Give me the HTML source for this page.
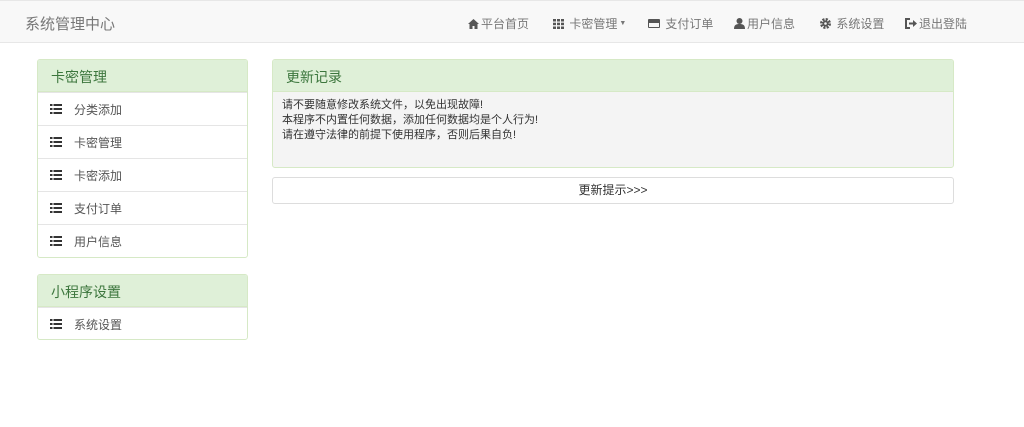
<!DOCTYPE html>
<html><head><meta charset="utf-8"><style>
*{box-sizing:border-box;margin:0;padding:0}
body{width:1024px;height:427px;background:#fff;font-family:"Liberation Sans","Noto Sans CJK SC",sans-serif;font-size:12px;color:#333;position:relative;overflow:hidden}
.nav{position:absolute;left:0;top:0;width:1024px;height:43px;background:#f8f8f8;border-top:1px solid #e7e7e7;border-bottom:1px solid #e7e7e7}
.brand{position:absolute;left:25px;top:12px;font-size:15px;color:#777}
.ni{position:absolute;top:14px;color:#777;font-size:12px;display:flex;align-items:center}
.ni svg{margin-right:2px}
.panel{position:absolute;border:1px solid #d6e9c6;border-radius:3px;overflow:hidden;background:#fff}
.ph{height:32px;background:#dff0d8;color:#3c763d;font-size:14px;padding:7px 13px;border-bottom:1px solid #d6e9c6}
.item{height:33px;border-top:1px solid #e5e5e5;padding:9px 12px;color:#555;display:flex;align-items:center}
.item:first-of-type{border-top:none}
.item svg{margin-right:12px}
</style></head><body>
<div class="nav">
<div class="brand">系统管理中心</div>
<div class="ni" style="left:468px"><svg width="11" height="10" viewBox="0 0 11 10"><path d="M5.5 0L0 5h1.5v5h3V7h2v3h3V5H11z" fill="#555"/></svg>平台首页</div>
<div class="ni" style="left:553px"><svg width="11" height="10" viewBox="0 0 11 10" fill="#555"><rect x="0" y="0" width="3" height="2.5"/><rect x="4" y="0" width="3" height="2.5"/><rect x="8" y="0" width="3" height="2.5"/><rect x="0" y="3.7" width="3" height="2.5"/><rect x="4" y="3.7" width="3" height="2.5"/><rect x="8" y="3.7" width="3" height="2.5"/><rect x="0" y="7.5" width="3" height="2.5"/><rect x="4" y="7.5" width="3" height="2.5"/><rect x="8" y="7.5" width="3" height="2.5"/></svg>&nbsp;卡密管理<span style="font-size:7px;margin-left:2px">▼</span></div>
<div class="ni" style="left:648px"><svg width="12" height="9" viewBox="0 0 12 9"><rect x="0" y="0" width="12" height="9" rx="1" fill="#555"/><rect x="1" y="4" width="10" height="4" fill="#f8f8f8"/></svg>&nbsp;支付订单</div>
<div class="ni" style="left:734px"><svg width="11" height="11" viewBox="0 0 11 11" fill="#555"><circle cx="5.5" cy="3" r="3"/><path d="M0 11c0-4 2-5 5.5-5S11 7 11 11z"/></svg>用户信息</div>
<div class="ni" style="left:820px"><svg width="11" height="11" viewBox="0 0 11 11"><circle cx="5.5" cy="5.5" r="4" fill="none" stroke="#555" stroke-width="3" stroke-dasharray="2 1.15"/><circle cx="5.5" cy="5.5" r="3" fill="#555"/><circle cx="5.5" cy="5.5" r="1.3" fill="#f8f8f8"/></svg>&nbsp;系统设置</div>
<div class="ni" style="left:905px"><svg width="12" height="11" viewBox="0 0 12 11"><path d="M5 1H1v9h4" fill="none" stroke="#555" stroke-width="2"/><path d="M4 4.5h4V2l4 3.5-4 3.5V6.5H4z" fill="#555"/></svg>退出登陆</div>
</div>

<div class="panel" style="left:37px;top:59px;width:211px;height:199px">
<div class="ph">卡密管理</div>
<div class="item"><svg width="12" height="10" viewBox="0 0 12 10" fill="#333"><rect x="0" y="0" width="2.5" height="2"/><rect x="3.5" y="0" width="8.5" height="2"/><rect x="0" y="4" width="2.5" height="2"/><rect x="3.5" y="4" width="8.5" height="2"/><rect x="0" y="8" width="2.5" height="2"/><rect x="3.5" y="8" width="8.5" height="2"/></svg>分类添加</div>
<div class="item"><svg width="12" height="10" viewBox="0 0 12 10" fill="#333"><rect x="0" y="0" width="2.5" height="2"/><rect x="3.5" y="0" width="8.5" height="2"/><rect x="0" y="4" width="2.5" height="2"/><rect x="3.5" y="4" width="8.5" height="2"/><rect x="0" y="8" width="2.5" height="2"/><rect x="3.5" y="8" width="8.5" height="2"/></svg>卡密管理</div>
<div class="item"><svg width="12" height="10" viewBox="0 0 12 10" fill="#333"><rect x="0" y="0" width="2.5" height="2"/><rect x="3.5" y="0" width="8.5" height="2"/><rect x="0" y="4" width="2.5" height="2"/><rect x="3.5" y="4" width="8.5" height="2"/><rect x="0" y="8" width="2.5" height="2"/><rect x="3.5" y="8" width="8.5" height="2"/></svg>卡密添加</div>
<div class="item"><svg width="12" height="10" viewBox="0 0 12 10" fill="#333"><rect x="0" y="0" width="2.5" height="2"/><rect x="3.5" y="0" width="8.5" height="2"/><rect x="0" y="4" width="2.5" height="2"/><rect x="3.5" y="4" width="8.5" height="2"/><rect x="0" y="8" width="2.5" height="2"/><rect x="3.5" y="8" width="8.5" height="2"/></svg>支付订单</div>
<div class="item"><svg width="12" height="10" viewBox="0 0 12 10" fill="#333"><rect x="0" y="0" width="2.5" height="2"/><rect x="3.5" y="0" width="8.5" height="2"/><rect x="0" y="4" width="2.5" height="2"/><rect x="3.5" y="4" width="8.5" height="2"/><rect x="0" y="8" width="2.5" height="2"/><rect x="3.5" y="8" width="8.5" height="2"/></svg>用户信息</div>
</div>

<div class="panel" style="left:37px;top:274px;width:211px;height:66px">
<div class="ph">小程序设置</div>
<div class="item"><svg width="12" height="10" viewBox="0 0 12 10" fill="#333"><rect x="0" y="0" width="2.5" height="2"/><rect x="3.5" y="0" width="8.5" height="2"/><rect x="0" y="4" width="2.5" height="2"/><rect x="3.5" y="4" width="8.5" height="2"/><rect x="0" y="8" width="2.5" height="2"/><rect x="3.5" y="8" width="8.5" height="2"/></svg>系统设置</div>
</div>

<div class="panel" style="left:272px;top:59px;width:682px;height:109px;background:#f4f4f4">
<div class="ph">更新记录</div>
<div style="padding:6px 9px;font-size:11px;line-height:15px;color:#333">请不要随意修改系统文件，以免出现故障!<br>本程序不内置任何数据，添加任何数据均是个人行为!<br>请在遵守法律的前提下使用程序，否则后果自负!</div>
</div>

<div style="position:absolute;left:272px;top:177px;width:682px;height:27px;border:1px solid #ddd;border-radius:3px;text-align:center;line-height:25px;font-size:12px;color:#333">更新提示&gt;&gt;&gt;</div>
</body></html>
